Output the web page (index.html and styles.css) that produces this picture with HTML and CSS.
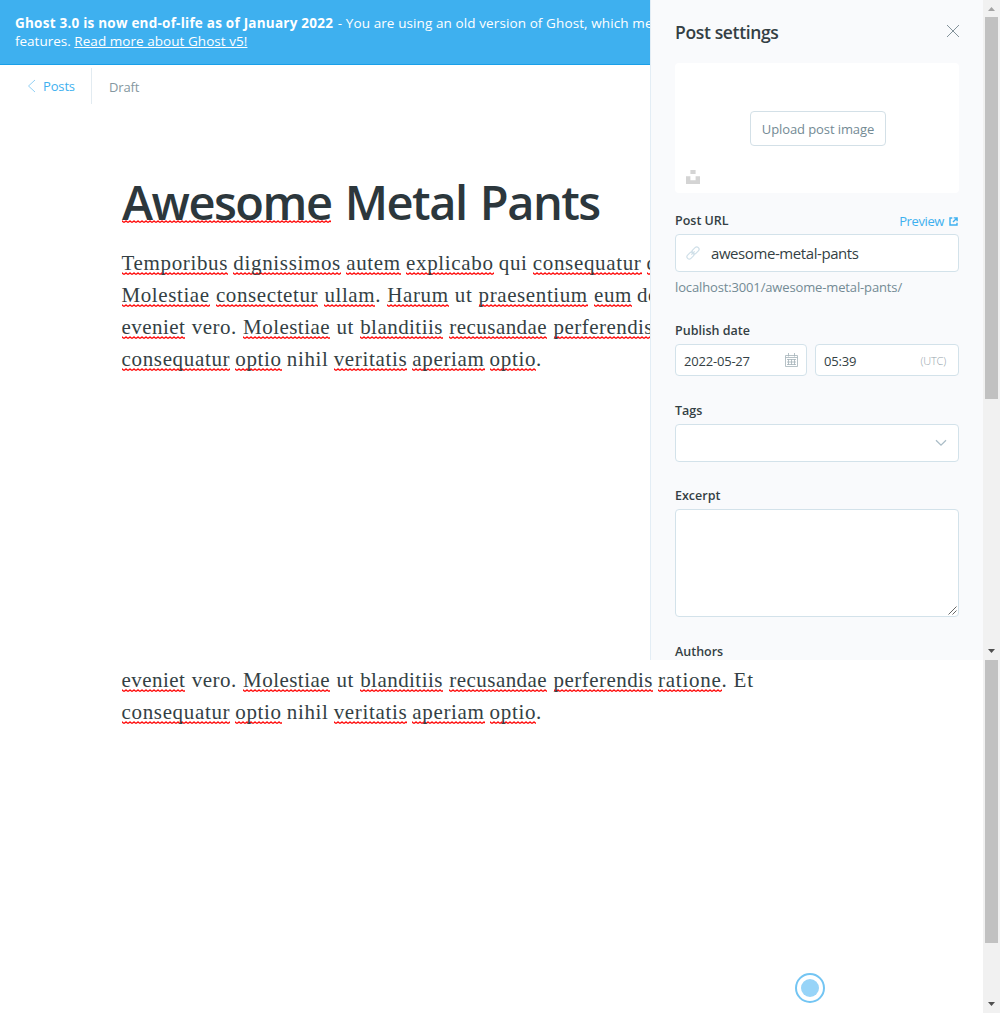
FILE: index.html
```html
<!DOCTYPE html>
<html lang="en">
<head>
<meta charset="utf-8">
<title>Awesome Metal Pants</title>
<link rel="stylesheet" href="styles.css">
</head>
<body>
<div class="page">
  <section class="screen screen-top">
    <main class="editor">
      <div class="banner">
        <div><strong class="b1">Ghost 3.0 is now end-of-life as of January 2022</strong><span class="b2"> - You are using an old version of Ghost, which means</span></div>
        <div class="b3">features. <a class="b4">Read more about Ghost v5!</a></div>
      </div>
      <header class="toolbar">
        <a class="back"><svg width="9" height="14" viewBox="0 0 9 14"><path d="M8 1 1.500 7 8 13"/></svg><span>Posts</span></a>
        <span class="status">Draft</span>
      </header>
      <h1 class="title"><u>Awesome</u> <span>Metal Pants</span></h1>
      <div class="copy">
        <div class="line"><p class="l1"><u>Temporibus</u> <u>dignissimos</u> <u>autem</u> <u>explicabo</u> qui <u>consequatur</u></p><p><u>d</u></p></div>
        <div class="line"><p class="l2"><u>Molestiae</u> <u>consectetur</u> <u>ullam</u>. <u>Harum</u> ut <u>praesentium</u> <u>eum</u></p><p>do</p></div>
        <div class="line"><p class="l3"><u>eveniet</u> vero. <u>Molestiae</u> ut <u>blanditiis</u> <u>recusandae</u> <u>perferendis</u></p></div>
        <div class="line"><p class="l4"><u>consequatur</u> <u>optio</u> nihil <u>veritatis</u> <u>aperiam</u> <u>optio</u>.</p></div>
      </div>
    </main>
    <aside class="settings">
      <div class="head"><h2>Post settings</h2><svg class="close" width="14" height="14" viewBox="0 0 14 14"><path d="M1 1l12 12M13 1 1 13"/></svg></div>
      <div class="upload">
        <button>Upload post image</button>
        <svg class="unsplash" width="14" height="14" viewBox="0 0 14 14"><path d="M4.400 0h5.200v4H4.400zM0 6.200h4.400v4h5.200v-4H14V14H0z"/></svg>
      </div>
      <div class="field url">
        <div class="row"><label>Post URL</label><a class="preview"><span>Preview</span><svg width="9" height="9" viewBox="0 0 9 9"><path d="M3.300 1H1v7h7V5.700M4.700.9H8.100v3.400M8 1 4 5"/></svg></a></div>
        <div class="input"><svg class="chain" width="14" height="14" viewBox="0 0 24 24"><g transform="rotate(-45 12 12)"><rect x="-1" y="8" width="14" height="8" rx="4"/><rect x="11" y="8" width="14" height="8" rx="4"/><path d="M8 12h8"/></g></svg><span>awesome-metal-pants</span></div>
        <p class="hint">localhost:3001/awesome-metal-pants/</p>
      </div>
      <div class="field date">
        <label>Publish date</label>
        <div class="pair">
          <div class="input"><span>2022-05-27</span><svg width="13" height="14" viewBox="0 0 13 14"><path d="M.5 2.500h12v11H.5zM.5 4.500h12M3.500 0v3.500M9.500 0v3.500M2 6.500h9M2 9h9M2 11.500h9M3.500 6v6M6.500 6v6M9.500 6v6"/></svg></div>
          <div class="input"><span>05:39</span><small>(UTC)</small></div>
        </div>
      </div>
      <div class="field tags">
        <label>Tags</label>
        <div class="input"><svg width="12" height="8" viewBox="0 0 12 8"><path d="M1 1.200 6 6.200 11 1.200"/></svg></div>
      </div>
      <div class="field excerpt">
        <label>Excerpt</label>
        <div class="input area"><svg width="9" height="9" viewBox="0 0 9 9"><path d="M.5 8.500 8.500.5M4.500 8.500 8.500 4.500"/></svg></div>
      </div>
      <label>Authors</label>
    </aside>
    <div class="scroll"><svg class="up" width="7" height="4" viewBox="0 0 7 4"><path d="M0 4 3.500 0 7 4z"/></svg><i></i><svg class="down" width="7" height="4" viewBox="0 0 7 4"><path d="M0 0h7L3.500 4z"/></svg></div>
  </section>
  <section class="screen screen-bottom">
    <main class="editor">
      <div class="copy">
        <div class="line"><p class="l3"><u>eveniet</u> vero. <u>Molestiae</u> ut <u>blanditiis</u> <u>recusandae</u> <u>perferendis</u></p><p class="tail"><u>ratione</u>. Et</p></div>
        <div class="line"><p class="l4"><u>consequatur</u> <u>optio</u> nihil <u>veritatis</u> <u>aperiam</u> <u>optio</u>.</p></div>
      </div>
      <svg class="beacon" width="30" height="30" viewBox="0 0 30 30"><circle cx="15" cy="15" r="14"/><circle class="dot" cx="15" cy="15" r="9"/></svg>
    </main>
    <div class="scroll"><i></i><svg class="down" width="7" height="4" viewBox="0 0 7 4"><path d="M0 0h7L3.500 4z"/></svg></div>
  </section>
</div>
</body>
</html>
```
FILE: styles.css
```css
* { box-sizing: border-box; }
body, h1, h2, p { margin: 0; }
body { background: #fff; font-family: "Open Sans", "Noto Sans", sans-serif; color: #343f44; }
svg { display: block; fill: none; stroke-linecap: butt; }
.page { width: 1000px; height: 1013px; overflow: hidden; }
.screen { display: flex; overflow: hidden; }
.screen-top { height: 660px; }
.screen-bottom { height: 353px; }
.editor { flex: 1; min-width: 0; overflow: hidden; white-space: nowrap; }

.banner { height: 65px; padding: 14px 0 0 15px; background: #3eb0ef; border-bottom: 1px solid #1a9fe8; color: #fff; font-size: 13.500px; line-height: 18px; }
.banner strong { font-weight: 700; }
.b1 { letter-spacing: .23px; }
.b2 { padding-left: 1px; letter-spacing: .1px; }
.b4 { text-decoration: underline; letter-spacing: .05px; }

.toolbar { display: flex; height: 39px; padding-top: 3px; font-size: 13px; line-height: 36px; letter-spacing: -.15px; }
.back { display: flex; align-items: center; gap: 7px; width: 92px; padding-left: 27px; border-right: 1px solid #e2ebf1; color: #3eb0ef; }
.back svg { stroke: #91d0f5; }
.status { padding: 1px 0 0 17px; color: #8597a0; }

.title { padding: 66px 0 0 122px; font-size: 47px; line-height: 64px; font-weight: 600; color: #2c373c; letter-spacing: -1.500px; word-spacing: 2.500px; }
.copy { padding: 13px 0 0 121.500px; font: 21px/32px "Liberation Serif", serif; word-spacing: -2px; }
.line { display: flex; gap: 5px; height: 32px; letter-spacing: .5px; }
.l1, .l2, .l3, .l4 { flex: none; text-align-last: justify; }
.l1 { width: 520px; letter-spacing: .66px; }
.l2 { width: 510.500px; letter-spacing: .6px; }
.l3 { width: 531.500px; letter-spacing: .45px; }
.l4 { width: 420.500px; letter-spacing: .66px; }
.tail { letter-spacing: .75px; word-spacing: 0; }
u { text-decoration: none; background: url("data:image/svg+xml,%3Csvg xmlns='http://www.w3.org/2000/svg' width='4' height='3'%3E%3Cpath d='M-1 .8 0 .8 1.500 2.200 2.500 2.200 4 .8' fill='none' stroke='red' stroke-width='1.300'/%3E%3C/svg%3E") repeat-x 0 100%; }
.title u { background-position: 0 calc(100% - 11px); }

.settings { width: 333px; padding: 0 24px; border-left: 1px solid #e3edf5; background: #f9fafc; font-size: 13px; }
.head { display: flex; justify-content: space-between; height: 63px; }
h2 { font-size: 17.500px; line-height: 24px; font-weight: 600; padding-top: 20px; letter-spacing: -.35px; }
.close { margin: 24px -1px 0 0; stroke: #657780; stroke-width: .8; }
.upload { position: relative; display: flex; align-items: center; justify-content: center; width: 284px; height: 130px; border-radius: 4px; background: #fff; }
button { width: 136px; height: 35px; padding: 2px 0 0; margin-left: 2px; border: 1px solid #d3e0e7; border-radius: 4px; background: #fff; color: #738a94; font: inherit; letter-spacing: -.1px; }
.unsplash { position: absolute; left: 11px; bottom: 9px; fill: #d4d4d4; }
label { display: block; font-size: 12.500px; font-weight: 600; line-height: 18px; }
.row { display: flex; justify-content: space-between; align-items: flex-start; }
.url { height: 110px; padding-top: 19px; }
.preview { display: flex; align-items: center; gap: 5px; line-height: 18px; letter-spacing: -.4px; color: #3eb0ef; margin-right: 1px; }
.preview svg { stroke: #3eb0ef; stroke-width: 1.400; }
.input { display: flex; align-items: center; width: 284px; height: 38px; border: 1px solid #d3e2ea; border-radius: 4px; background: #fff; }
.url .row { height: 22px; }
.url .input { padding-left: 10px; gap: 11px; font-size: 15px; letter-spacing: -.42px; }
.chain { stroke: #cfdfe8; stroke-width: 2; overflow: visible; }
.hint { padding-top: 6px; line-height: 18px; color: #738a94; letter-spacing: -.14px; }
.date { height: 96px; padding-top: 19px; }
.pair { display: flex; gap: 8px; padding-top: 4px; letter-spacing: -.2px; }
.pair .input { height: 32px; justify-content: space-between; padding: 2px 8px 0; }
.pair .input:first-child { width: 132px; }
.pair .input:last-child { width: 144px; padding-right: 12px; }
.pair svg { margin-top: -3px; stroke: #a5b2b9; stroke-width: .8; }
small { font-size: 11px; font-weight: 300; color: #95a4ac; padding-bottom: 2px; letter-spacing: -.2px; }
.tags { height: 84px; padding-top: 3px; }
.tags .input, .excerpt .input { margin-top: 4px; }
.tags .input { justify-content: flex-end; padding-right: 11px; }
.tags svg { stroke: #abbdc7; stroke-width: 1.300; }
.excerpt { height: 160px; padding-top: 4px; }
.excerpt .area { height: 108px; align-items: flex-end; justify-content: flex-end; padding: 0 1px 1px 0; }
.area svg { stroke: #555; stroke-width: .9; }

.scroll { display: flex; flex-direction: column; align-items: center; width: 17px; background: #f1f1f1; }
.scroll i { width: 13px; height: 382px; background: #c1c1c1; }
.up { margin: 7px 0 6px; fill: #a3a3a3; }
.down { margin: auto 0 7px; fill: #505050; }
.screen-bottom .scroll i { height: 283px; }
.screen-bottom .copy { padding-top: 4px; }
.beacon { margin: 245px 0 0 795px; stroke: #73c5f3; stroke-width: 2; }
.beacon .dot { fill: #97d4f8; stroke: none; }
```
